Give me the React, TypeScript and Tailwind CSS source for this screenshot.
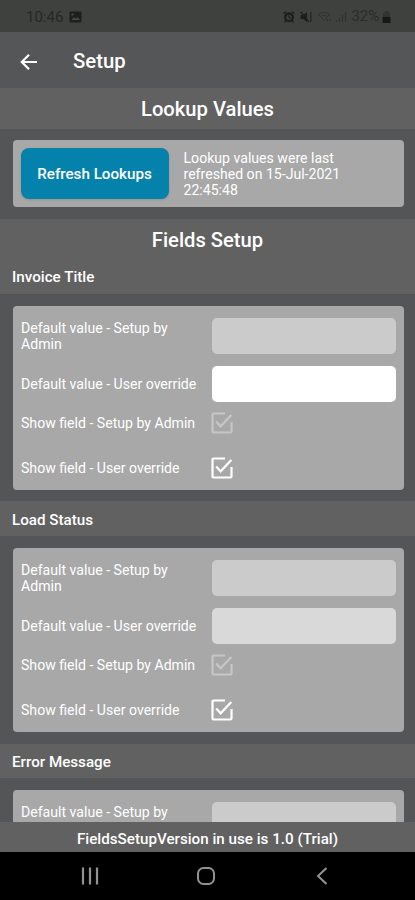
import React from "react";

interface CheckMarkProps {
  label: string;
  disabled?: boolean;
}

interface FieldCardProps {
  overrideClass: string;
}

const CheckMark: React.FC<CheckMarkProps> = ({ label, disabled = false }) => (
  <svg
    role="img"
    aria-label={label}
    className={disabled ? "text-[#c6c6c6]" : "text-white"}
    width="22"
    height="22"
    viewBox="0 0 22 22"
    fill="none"
    stroke="currentColor"
    strokeWidth="2.2"
  >
    <path d="M14 1.5H2.5a1 1 0 0 0-1 1v17a1 1 0 0 0 1 1h17a1 1 0 0 0 1-1V10" />
    <path d="M5.2 9.5 9.6 14.3 20.3 3" />
  </svg>
);

const AlarmIcon: React.FC = () => (
  <svg width="12" height="12" viewBox="0 0 12 12" fill="none" stroke="currentColor">
    <circle cx="6" cy="6.3" r="3.8" strokeWidth="2.4" />
    <path d="M.6 2.8 3 .8M11.4 2.8 9 .8M2.8 9.5 1.5 11.3M9.2 9.5l1.3 1.8" strokeWidth="1.4" />
    <path d="M6 4v2.6h2" strokeWidth="1.1" />
  </svg>
);

const MuteIcon: React.FC = () => (
  <svg width="12" height="12" viewBox="0 0 12 12" fill="currentColor">
    <path d="M.5 4h2.8L7 1v10L3.3 8H.5z" />
    <path d="m.8.8 8 10" stroke="currentColor" strokeWidth="1.3" />
    <path d="M10.8 1v10" stroke="currentColor" strokeWidth="1" />
  </svg>
);

const WifiIcon: React.FC = () => (
  <svg width="14" height="12" viewBox="0 0 14 12" fill="none" stroke="currentColor">
    <path d="M.6 3.6C3.7.8 8.3.8 11.4 3.6L6 9.5z" />
    <path d="M3 5.2c1.800-1.400 4.200-1.400 6 0M9.500 8v2.500M12 7.500V10" />
  </svg>
);

const SignalIcon: React.FC = () => (
  <svg width="12" height="12" viewBox="0 0 12 12" stroke="currentColor" strokeWidth="1.2">
    <path d="M1.500 9v2M4.500 7v4M7.500 4v7M10.500 1v10" />
  </svg>
);

const StatusBar: React.FC = () => (
  <div className="flex h-8 shrink-0 items-center bg-[#3f413f] pt-0.5 pr-6 pl-[26px] text-[15px] text-[#252725]">
    <span>10:46</span>
    <svg className="ml-1.5" width="13" height="12" viewBox="0 0 13 12">
      <rect x=".5" y=".5" width="12" height="11" rx="1" fill="#1d1f1d" />
      <path d="m2.500 9 2.500-3 2 2 1.500-2 2.500 3zM2.500 2.500h2v2h-2z" fill="#484a48" />
    </svg>
    <div className="ml-auto flex items-center">
      <div className="flex items-center gap-[5px] text-[#1d1f1d]">
        <AlarmIcon />
        <MuteIcon />
      </div>
      <div className="ml-1.5 flex gap-[3px] text-[#303230]">
        <WifiIcon />
        <SignalIcon />
      </div>
      <span className="ml-1 text-[15.500px] tracking-[-0.3px] text-[#2a2c2a]">32%</span>
      <svg className="ml-[3px]" width="9" height="12" viewBox="0 0 9 12">
        <path d="M3 0h3v1.500h2V6H1V1.500h2z" fill="#313331" />
        <path d="M.500 6h8v6h-8z" fill="#171917" />
      </svg>
    </div>
  </div>
);

const FieldCard: React.FC<FieldCardProps> = ({ overrideClass }) => (
  <div className="mr-[11.5px] mt-3 mb-[11.700px] ml-[12.5px] h-[184px] rounded bg-[#a8a8a8] pt-3 pr-[7.5px] pl-[8.5px] text-[14.1px] leading-4 text-white">
    <div className="flex h-9 items-center">
      <p className="w-[190.5px] pr-8">Default value - Setup by Admin</p>
      <div className="h-9 flex-1 rounded-[5px] bg-[#cbcbcb]" />
    </div>
    <div className="mt-3 flex h-9 items-center">
      <p className="w-[190.5px]">Default value - User override</p>
      <div className={`h-9 flex-1 rounded-[5px] ${overrideClass}`} />
    </div>
    <div className="mt-2.5 flex h-[22px] items-center">
      <p className="w-[190px]">Show field - Setup by Admin</p>
      <CheckMark label="Show field - Setup by Admin" disabled />
    </div>
    <div className="mt-[23px] flex h-[22px] items-center">
      <p className="w-[190px]">Show field - User override</p>
      <CheckMark label="Show field - User override" />
    </div>
  </div>
);

const fields = [
  { name: "Invoice Title", overrideClass: "bg-white" },
  { name: "Load Status", overrideClass: "bg-[#d9d9d9]" },
  { name: "Error Message", overrideClass: "bg-white" },
];

const App: React.FC = () => {
  return (
    <div className="flex h-[900px] w-[415px] flex-col overflow-hidden bg-[#535556] font-[Roboto,sans-serif] text-white">
      <StatusBar />
      <header className="flex h-14 shrink-0 items-center bg-[#555658] pt-[3px] pl-5">
        <svg width="18" height="18" viewBox="0 0 18 18" fill="none" stroke="currentColor" strokeWidth="2.2">
          <path d="M17 9H2.500M9 1.800 1.800 9 9 16.200" />
        </svg>
        <h1 className="ml-[35px] text-[20.3px] font-medium">Setup</h1>
      </header>
      <main className="min-h-0 flex-1 overflow-hidden">
        <h2 className="flex h-[41px] items-center justify-center bg-[#616161] pt-0.5 text-[20.2px] font-medium">
          Lookup Values
        </h2>
        <div className="mt-[11px] mr-[11.5px] mb-3 ml-[12.5px] flex h-[67px] items-center rounded bg-[#a8a8a8] px-2">
          <button className="h-[51px] w-[148px] rounded-lg bg-[#0582ac] pt-0.5 text-[15.2px] font-medium shadow-sm">
            Refresh Lookups
          </button>
          <p className="ml-[15px] w-[180px] text-[14.1px] leading-4">
            Lookup values were last refreshed on 15-Jul-2021 22:45:48
          </p>
        </div>
        <h2 className="flex h-10 items-center justify-center bg-[#616161] pt-[3px] text-[20.2px] font-medium">
          Fields Setup
        </h2>
        {fields.map((field) => (
          <section key={field.name}>
            <h3 className="flex h-[34.600px] items-center bg-[#616161] pt-[3px] pl-3 text-[15.2px] font-medium">
              {field.name}
            </h3>
            <FieldCard overrideClass={field.overrideClass} />
          </section>
        ))}
      </main>
      <footer className="flex h-[30px] shrink-0 items-center justify-center bg-[#616161] pt-[5px] text-[15.2px] font-medium">
        FieldsSetupVersion in use is 1.0 (Trial)
      </footer>
      <nav className="flex h-12 shrink-0 items-center bg-black pl-[81px] text-[#929292]">
        <svg width="18" height="18" viewBox="0 0 18 18" stroke="currentColor" strokeWidth="2.2">
          <path d="M2 .500v17M9 .500v17M16 .500v17" />
        </svg>
        <svg className="ml-[97px]" width="20" height="20" viewBox="0 0 20 20" fill="none" stroke="currentColor" strokeWidth="2">
          <rect x="2" y="2" width="16" height="16" rx="5.500" />
        </svg>
        <svg className="ml-[100px]" width="12" height="18" viewBox="0 0 12 18" fill="none" stroke="currentColor" strokeWidth="2">
          <path d="M10.500 1 2 9l8.500 8" />
        </svg>
      </nav>
    </div>
  );
};

export default App;
